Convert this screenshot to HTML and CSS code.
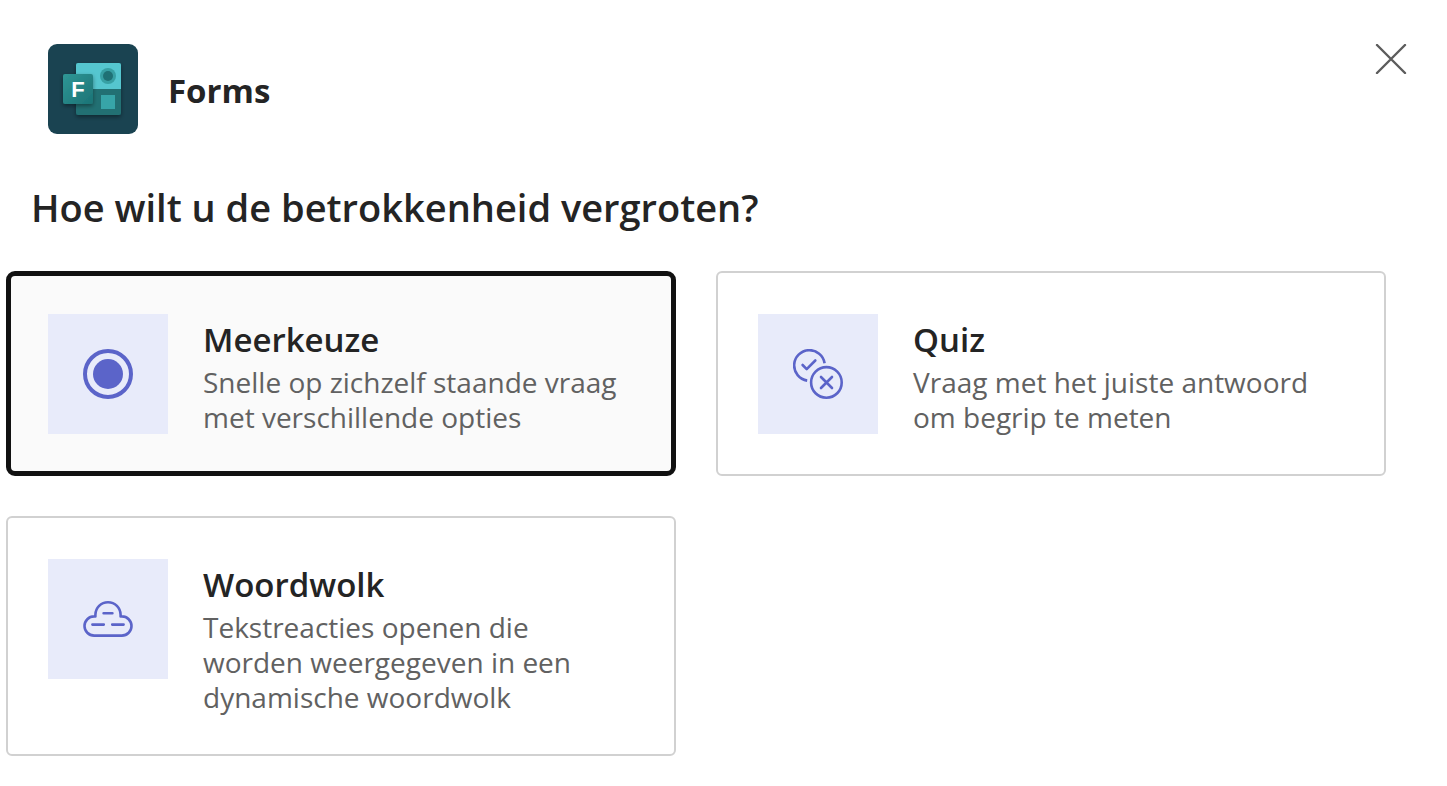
FILE: index.html
```
<!DOCTYPE html>
<html lang="nl">
<head>
    <meta charset="UTF-8">
    <meta name="viewport" content="width=device-width, initial-scale=1.0">
    <title>Forms</title>
    <link rel="stylesheet" href="styles.css">
</head>
<body>
    <header class="header">
        <svg class="app-logo" viewBox="0 0 90 90" aria-hidden="true">
            <defs>
                <linearGradient id="badge" x1="0" y1="0" x2="1" y2="1">
                    <stop offset="0" stop-color="#2f9796"/>
                    <stop offset="1" stop-color="#1c7375"/>
                </linearGradient>
                <filter id="shadow" x="-30%" y="-30%" width="160%" height="160%">
                    <feDropShadow dx="0" dy="2" stdDeviation="2" flood-color="#000" flood-opacity="0.4"/>
                </filter>
            </defs>
            <rect width="90" height="90" rx="9" fill="#1a4351"/>
            <g filter="url(#shadow)">
                <rect x="28" y="19" width="45" height="52" rx="2" fill="#217073"/>
                <path d="M28 45V21a2 2 0 0 1 2-2h41a2 2 0 0 1 2 2v24z" fill="#54c6cf"/>
            </g>
            <circle cx="60" cy="32" r="8" fill="#37a0a4"/>
            <circle cx="60" cy="32" r="5" fill="#1f7175"/>
            <rect x="53" y="51" width="14" height="14" fill="#37a5a8"/>
            <rect x="15" y="30" width="30" height="30" rx="2" fill="url(#badge)" filter="url(#shadow)"/>
            <text class="logo-letter" x="30" y="53" text-anchor="middle">F</text>
        </svg>
        <h1 class="app-name">Forms</h1>
        <button type="button" class="close-button" aria-label="Sluiten">
            <svg width="32" height="30" viewBox="0 0 32 30" fill="none" stroke="#5c5c5c" stroke-width="2.4" stroke-linecap="round">
                <path d="M2 1l28 28M30 1L2 29"/>
            </svg>
        </button>
    </header>

    <main>
        <h2 class="question">Hoe wilt u de betrokkenheid vergroten?</h2>

        <div class="options">
            <button type="button" class="option selected">
                <span class="option-icon">
                    <svg width="50" height="50" viewBox="0 0 50 50">
                        <circle cx="25" cy="25" r="23" fill="none" stroke="#5b64c9" stroke-width="4"/>
                        <circle cx="25" cy="25" r="15" fill="#5b64c9"/>
                    </svg>
                </span>
                <span class="option-text">
                    <span class="option-title">Meerkeuze</span>
                    <span class="option-description">Snelle op zichzelf staande vraag met verschillende opties</span>
                </span>
            </button>

            <button type="button" class="option">
                <span class="option-icon">
                    <svg width="50" height="50" viewBox="0 0 50 50" fill="none" stroke="#5b64c9" stroke-width="2.6">
                        <path d="M14.2 31.6A15.3 15.3 0 1 1 31.6 14.2"/>
                        <circle cx="33.4" cy="33.4" r="15.3"/>
                        <path d="M9.6 16l4.1 4.1 8.6-8.6M28 28l11 11M39 28L28 39" stroke-linecap="round" stroke-linejoin="round"/>
                    </svg>
                </span>
                <span class="option-text">
                    <span class="option-title">Quiz</span>
                    <span class="option-description">Vraag met het juiste antwoord om begrip te meten</span>
                </span>
            </button>

            <button type="button" class="option">
                <span class="option-icon">
                    <svg width="50" height="50" viewBox="0 0 50 50" fill="none" stroke="#5b64c9" stroke-width="2.6" stroke-linecap="round">
                        <path d="M11.1 41.6a9.6 9.6 0 0 1 0-19.2h1.3v-1.6a12.6 12.6 0 0 1 25.2 0v1.6h1.3a9.6 9.6 0 0 1 0 19.2z" stroke-linejoin="round"/>
                        <path d="M20.6 19.2h8.8M9.4 30.6h11.4M29.2 30.6h11.4"/>
                    </svg>
                </span>
                <span class="option-text">
                    <span class="option-title">Woordwolk</span>
                    <span class="option-description">Tekstreacties openen die worden weergegeven in een dynamische woordwolk</span>
                </span>
            </button>
        </div>
    </main>
</body>
</html>
```

FILE: styles.css
```
* {
    margin: 0;
    padding: 0;
    box-sizing: border-box;
    font-family: 'Segoe UI', 'Open Sans', sans-serif;
}

:root {
    --text-color: #242424;
    --muted-color: #616161;
    --border-color: #d1d1d1;
    --icon-background: #e8ebfa;
}

body {
    background-color: #fff;
    color: var(--text-color);
}

.header {
    display: flex;
    align-items: center;
    padding: 44px 40px 0 48px;
}

.app-logo {
    width: 90px;
    height: 90px;
    margin-right: 30px;
}

.logo-letter {
    font-family: 'Liberation Sans', sans-serif;
    font-size: 22px;
    font-weight: 700;
    fill: #fff;
}

.app-name {
    padding-top: 2px;
    font-size: 33px;
    font-weight: 700;
}

.close-button {
    display: flex;
    align-self: flex-start;
    margin-left: auto;
    background: none;
    border: none;
    cursor: pointer;
}

.question {
    padding: 47px 31px 37px;
    font-size: 38px;
    font-weight: 600;
    line-height: 53px;
}

.options {
    display: grid;
    grid-template-columns: 1fr 1fr;
    gap: 40px;
    padding: 0 61px 30px 6px;
}

.option {
    display: flex;
    align-items: flex-start;
    gap: 35px;
    padding: 41px 40px 39px;
    background: #fff;
    border: 2px solid var(--border-color);
    border-radius: 6px;
    color: inherit;
    text-align: left;
    cursor: pointer;
}

.option.selected {
    padding: 38px 37px 36px;
    background: #fafafa;
    border: 5px solid #111;
    border-radius: 9px;
}

.option-icon {
    display: flex;
    flex: none;
    align-items: center;
    justify-content: center;
    width: 120px;
    height: 120px;
    background: var(--icon-background);
}

.option-text {
    padding-top: 1px;
}

.option-title {
    display: block;
    font-size: 33px;
    font-weight: 600;
    line-height: 50px;
}

.option-description {
    display: block;
    color: var(--muted-color);
    font-size: 28px;
    line-height: 35px;
}
```
